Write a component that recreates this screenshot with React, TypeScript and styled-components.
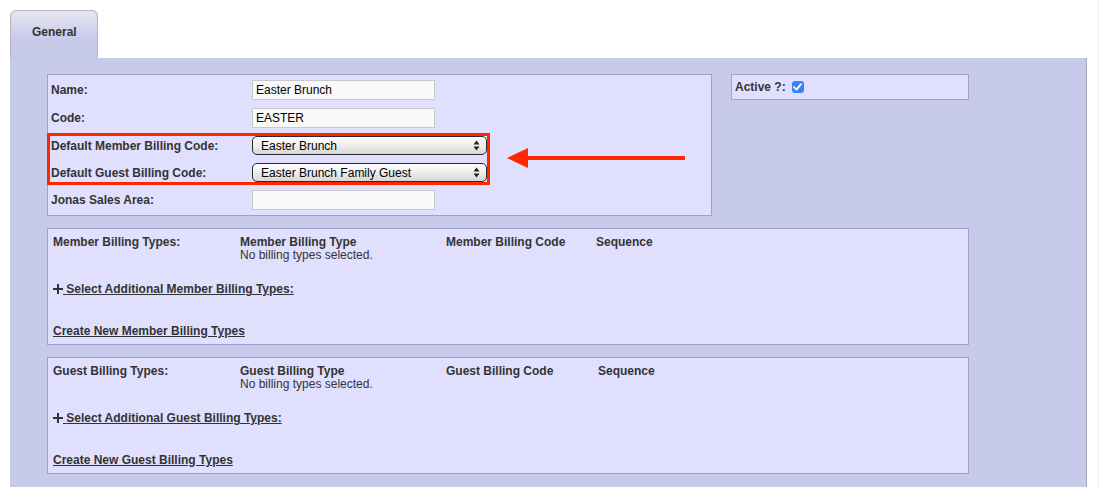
import React from 'react';
import styled, { createGlobalStyle } from 'styled-components';

const GlobalStyle = createGlobalStyle`
  html, body {
    margin: 0;
    padding: 0;
    background: #ffffff;
  }
  body {
    font-family: 'Liberation Sans', Arial, Helvetica, sans-serif;
    font-size: 12px;
    color: #333;
  }
`;

const billingSections = [
  {
    key: 'member',
    title: 'Member Billing Types:',
    typeHeader: 'Member Billing Type',
    codeHeader: 'Member Billing Code',
    codeWidth: 150,
    select: 'Select Additional Member Billing Types:',
    create: 'Create New Member Billing Types',
  },
  {
    key: 'guest',
    title: 'Guest Billing Types:',
    typeHeader: 'Guest Billing Type',
    codeHeader: 'Guest Billing Code',
    codeWidth: 152,
    select: 'Select Additional Guest Billing Types:',
    create: 'Create New Guest Billing Types',
  },
];

const SelectArrows = () => (
  <svg width="7" height="11" viewBox="0 0 7 11">
    <path d="M3.5 0.5 L6.5 4.5 L0.5 4.5 Z" fill="#222" />
    <path d="M3.5 10.5 L6.5 6.5 L0.5 6.5 Z" fill="#222" />
  </svg>
);

const PlusIcon = () => (
  <svg width="10" height="10" viewBox="0 0 10 10">
    <path d="M0 5 H10 M5 0 V10" stroke="#333" strokeWidth="2" />
  </svg>
);

export default function App() {
  return (
    <Page>
      <GlobalStyle />
      <TabBar>
        <Tab>General</Tab>
      </TabBar>
      <Panel>
        <TopRow>
          <FormBox>
            <FormGrid>
              <Label>Name:</Label>
              <TextInput>Easter Brunch</TextInput>
              <Label>Code:</Label>
              <TextInput>EASTER</TextInput>
              <Label>Default Member Billing Code:</Label>
              <SelectBox>
                <span>Easter Brunch</span>
                <SelectArrows />
              </SelectBox>
              <Label>Default Guest Billing Code:</Label>
              <SelectBox>
                <span>Easter Brunch Family Guest</span>
                <SelectArrows />
              </SelectBox>
              <Label>Jonas Sales Area:</Label>
              <TextInput />
            </FormGrid>
            <Highlight />
            <Arrow width="180" height="22" viewBox="0 0 180 22">
              <path d="M20 9 L179 9 L179 13 L20 13 Z" fill="#ff2600" />
              <path d="M1 11 L22 1 L22 21 Z" fill="#ff2600" />
            </Arrow>
          </FormBox>
          <ActiveBox>
            <Label>Active ?:</Label>
            <Check>
              <svg width="9" height="8" viewBox="0 0 9 8">
                <path d="M1 4.2 L3.5 6.6 L8 1.2" stroke="#fff" strokeWidth="1.8" fill="none" strokeLinecap="round" strokeLinejoin="round" />
              </svg>
            </Check>
          </ActiveBox>
        </TopRow>

        {billingSections.map((s) => (
          <BillingBox key={s.key}>
            <HeaderRow>
              <Label $width={187}>{s.title}</Label>
              <Column $width={206}>
                <Label>{s.typeHeader}</Label>
                <Plain>No billing types selected.</Plain>
              </Column>
              <Label $width={s.codeWidth}>{s.codeHeader}</Label>
              <Label>Sequence</Label>
            </HeaderRow>
            <SelectLink>
              <PlusIcon />
              <LinkText> {s.select}</LinkText>
            </SelectLink>
            <CreateLink>{s.create}</CreateLink>
          </BillingBox>
        ))}
      </Panel>
    </Page>
  );
}

/* ─── STYLED COMPONENTS ─── */
const Page = styled.div`
  padding: 10px 0 0 10px;
  min-height: 487px;
  box-sizing: border-box;
  display: flex;
  flex-direction: column;
  border-right: 1px solid #ececec;
  width: 1099px;
`;

const TabBar = styled.div`
  display: flex;
`;

const Tab = styled.div`
  width: 88px;
  height: 48px;
  box-sizing: border-box;
  padding: 14px 0 0 21px;
  border: 1px solid #b4b4c0;
  border-bottom: none;
  border-radius: 6px 6px 0 0;
  background: linear-gradient(#e6e6f0, #c8caea 60%);
  font-weight: bold;
  color: #333;
`;

const Panel = styled.div`
  flex: 1;
  width: 1077px;
  box-sizing: border-box;
  background: #c8caea;
  border-right: 1px solid #a8a8b4;
  padding: 16px 0 14px 37px;
`;

const TopRow = styled.div`
  display: flex;
  align-items: flex-start;
  gap: 19px;
`;

const Box = styled.div`
  background: #e0e0fe;
  border: 1px solid #a09ed0;
  box-sizing: border-box;
`;

const FormBox = styled(Box)`
  position: relative;
  width: 665px;
  padding: 5px 0 5px 3px;
`;

const FormGrid = styled.div`
  display: grid;
  grid-template-columns: 201px auto;
  row-gap: 8px;
  align-items: center;
  justify-items: start;
`;

const Label = styled.div<{ $width?: number }>`
  font-weight: bold;
  color: #333;
  line-height: 14px;
  ${(p) => (p.$width ? `width: ${p.$width}px; flex-shrink: 0;` : '')}
`;

const Plain = styled.div`
  color: #333;
  line-height: 13px;
`;

const TextInput = styled.div`
  width: 183px;
  height: 20px;
  box-sizing: border-box;
  border: 1px solid #c8c8cc;
  background: #f9f9f9;
  padding: 0 3px;
  line-height: 18px;
  font-size: 12px;
  color: #000;
`;

const SelectBox = styled.div`
  width: 235px;
  height: 19px;
  box-sizing: border-box;
  border: 1px solid #2a2a2a;
  border-radius: 5px;
  background: linear-gradient(#fdfdfd, #f0f0f0 45%, #d6d6d6);
  padding: 0 6px 0 8px;
  display: flex;
  align-items: center;
  justify-content: space-between;
  color: #000;
  font-size: 12px;
`;

const Highlight = styled.div`
  position: absolute;
  left: -1px;
  top: 58px;
  width: 443px;
  height: 52px;
  box-sizing: border-box;
  border: 3px solid #ff2600;
  pointer-events: none;
`;

const Arrow = styled.svg`
  position: absolute;
  left: 458px;
  top: 72px;
`;

const ActiveBox = styled(Box)`
  width: 238px;
  height: 26px;
  padding: 0 3px;
  display: flex;
  align-items: center;
  gap: 6px;
`;

const Check = styled.span`
  width: 12px;
  height: 12px;
  border-radius: 3px;
  background: #3b82f6;
  display: inline-flex;
  align-items: center;
  justify-content: center;
`;

const BillingBox = styled(Box)`
  width: 922px;
  height: 117px;
  margin-top: 12px;
  padding: 6px 5px 0 5px;
  display: flex;
  flex-direction: column;
`;

const HeaderRow = styled.div`
  display: flex;
  align-items: flex-start;
`;

const Column = styled.div<{ $width: number }>`
  width: ${(p) => p.$width}px;
  flex-shrink: 0;
  display: flex;
  flex-direction: column;
`;

const SelectLink = styled.div`
  margin-top: 20px;
  display: flex;
  align-items: center;
  font-weight: bold;
  line-height: 14px;
`;

const LinkText = styled.span`
  text-decoration: underline;
  color: #333;
  white-space: pre;
`;

const CreateLink = styled.div`
  margin-top: 28px;
  font-weight: bold;
  text-decoration: underline;
  color: #333;
  line-height: 14px;
`;
